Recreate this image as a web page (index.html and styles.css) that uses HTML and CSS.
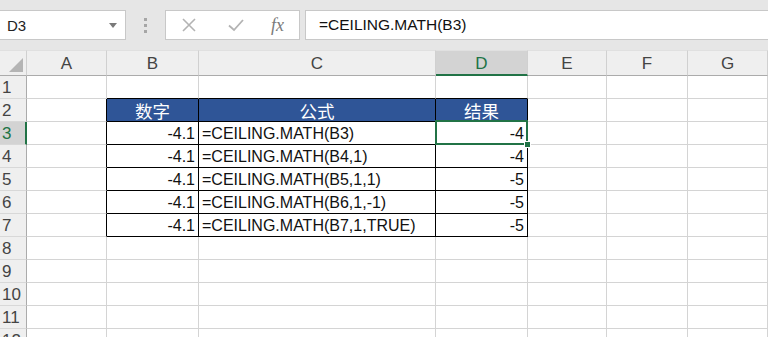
FILE: index.html
```html
<!DOCTYPE html>
<html lang="zh-CN">
<head>
  <meta charset="UTF-8" />
  <title>CEILING.MATH</title>
  <link rel="stylesheet" href="styles.css">
</head>
<body>

  <!-- Barra de fórmulas -->
  <div class="barra">
    <div class="caixa-nome">
      <span>D3</span>
      <svg class="seta" width="8" height="5" viewBox="0 0 8 5"><path d="M0 0h8L4 5z" fill="#7a7a7a"/></svg>
    </div>
    <div class="pontos"><i></i><i></i><i></i></div>
    <div class="botoes">
      <svg width="16" height="16" viewBox="0 0 16 16"><path d="M2 2L14 14M14 2L2 14" stroke="#b3b3b3" stroke-width="1.6"/></svg>
      <svg width="18" height="16" viewBox="0 0 18 16"><path d="M2 8.5L7 13L16 3" stroke="#b3b3b3" stroke-width="1.8" fill="none"/></svg>
      <span class="fx">fx</span>
    </div>
    <div class="formula">=CEILING.MATH(B3)</div>
  </div>

  <!-- Planilha -->
  <div class="planilha">
    <div class="canto"><svg width="14" height="14" viewBox="0 0 14 14"><path d="M14 0V14H0z" fill="#b4b4b4"/></svg></div>
    <div class="col">A</div>
    <div class="col">B</div>
    <div class="col">C</div>
    <div class="col ativa">D</div>
    <div class="col">E</div>
    <div class="col">F</div>
    <div class="col">G</div>

    <div class="lin">1</div>
    <div class="cel"></div><div class="cel topo"></div><div class="cel topo"></div><div class="cel topo"></div><div class="cel"></div><div class="cel"></div><div class="cel"></div>

    <div class="lin">2</div>
    <div class="cel borda-esq"></div>
    <div class="cel t cab">数字</div><div class="cel t cab">公式</div><div class="cel t cab">结果</div>
    <div class="cel"></div><div class="cel"></div><div class="cel"></div>

    <div class="lin ativa">3</div>
    <div class="cel borda-esq"></div>
    <div class="cel t num">-4.1</div><div class="cel t">=CEILING.MATH(B3)</div><div class="cel t num selecionada">-4</div>
    <div class="cel"></div><div class="cel"></div><div class="cel"></div>

    <div class="lin">4</div>
    <div class="cel borda-esq"></div>
    <div class="cel t num">-4.1</div><div class="cel t">=CEILING.MATH(B4,1)</div><div class="cel t num">-4</div>
    <div class="cel"></div><div class="cel"></div><div class="cel"></div>

    <div class="lin">5</div>
    <div class="cel borda-esq"></div>
    <div class="cel t num">-4.1</div><div class="cel t">=CEILING.MATH(B5,1,1)</div><div class="cel t num">-5</div>
    <div class="cel"></div><div class="cel"></div><div class="cel"></div>

    <div class="lin">6</div>
    <div class="cel borda-esq"></div>
    <div class="cel t num">-4.1</div><div class="cel t">=CEILING.MATH(B6,1,-1)</div><div class="cel t num">-5</div>
    <div class="cel"></div><div class="cel"></div><div class="cel"></div>

    <div class="lin">7</div>
    <div class="cel borda-esq"></div>
    <div class="cel t num">-4.1</div><div class="cel t">=CEILING.MATH(B7,1,TRUE)</div><div class="cel t num">-5</div>
    <div class="cel"></div><div class="cel"></div><div class="cel"></div>

    <div class="lin">8</div>
    <div class="cel"></div><div class="cel"></div><div class="cel"></div><div class="cel"></div><div class="cel"></div><div class="cel"></div><div class="cel"></div>
    <div class="lin">9</div>
    <div class="cel"></div><div class="cel"></div><div class="cel"></div><div class="cel"></div><div class="cel"></div><div class="cel"></div><div class="cel"></div>
    <div class="lin">10</div>
    <div class="cel"></div><div class="cel"></div><div class="cel"></div><div class="cel"></div><div class="cel"></div><div class="cel"></div><div class="cel"></div>
    <div class="lin">11</div>
    <div class="cel"></div><div class="cel"></div><div class="cel"></div><div class="cel"></div><div class="cel"></div><div class="cel"></div><div class="cel"></div>
    <div class="lin">12</div>
    <div class="cel"></div><div class="cel"></div><div class="cel"></div><div class="cel"></div><div class="cel"></div><div class="cel"></div><div class="cel"></div>
  </div>

</body>
</html>
```

FILE: styles.css
```css
body {
  margin: 0;
  width: 768px;
  height: 337px;
  overflow: hidden;
  background-color: #fff;
  font-family: "Liberation Sans", "Noto Sans CJK SC", sans-serif;
  color: #000;
}

.barra {
  height: 50px;
  box-sizing: border-box;
  padding-top: 10px;
  background-color: #e6e6e6;
  display: flex;
  align-items: flex-start;
}

.caixa-nome {
  width: 126px;
  height: 30px;
  box-sizing: border-box;
  background-color: #fff;
  border: 1px solid #c8c8c8;
  border-left: none;
  display: flex;
  align-items: center;
  justify-content: space-between;
  padding: 0 8px 0 7px;
  font-size: 15px;
  color: #222;
}

.seta {
  margin-top: 1px;
}

.pontos {
  width: 39px;
  height: 30px;
  display: flex;
  flex-direction: column;
  align-items: center;
  justify-content: center;
  gap: 3px;
}

.pontos i {
  width: 3px;
  height: 3px;
  background-color: #a6a6a6;
}

.botoes {
  width: 135px;
  height: 30px;
  box-sizing: border-box;
  background-color: #fff;
  border: 1px solid #c8c8c8;
  display: flex;
  align-items: center;
  padding-left: 15px;
  gap: 30px;
}

.fx {
  font-family: "Liberation Serif", serif;
  font-style: italic;
  font-size: 18px;
  color: #7a7a7a;
  margin-left: -4px;
}

.formula {
  flex: 1;
  margin-left: 5px;
  height: 30px;
  box-sizing: border-box;
  background-color: #fff;
  border: 1px solid #c8c8c8;
  border-right: none;
  padding-left: 13px;
  font-size: 15.5px;
  line-height: 28px;
  color: #111;
}

.planilha {
  display: grid;
  grid-template-columns: 27px 80px 92px 237px 92px 79px 81px 80px;
  grid-template-rows: 26px repeat(12, 23px);
}

.canto,
.col,
.lin {
  background-color: #efefef;
  box-sizing: border-box;
  border-right: 1px solid #d0d0d0;
  border-bottom: 1px solid #ababab;
  color: #444;
  font-size: 17px;
}

.canto {
  display: flex;
  align-items: flex-end;
  justify-content: flex-end;
  padding: 0 3px 3px 0;
  border-top: 1px solid #e0e0e0;
}

.col {
  display: flex;
  align-items: center;
  justify-content: center;
  border-top: 1px solid #e0e0e0;
  padding-top: 2px;
}

.col.ativa {
  background-color: #d3d3d3;
  border-bottom: 2px solid #217346;
  color: #217346;
}

.lin {
  border-bottom: 1px solid #d8d8d8;
  border-right: 1px solid #ababab;
  display: flex;
  align-items: center;
  padding-left: 2px;
  padding-top: 2px;
}

.lin.ativa {
  background-color: #d3d3d3;
  border-right: 2px solid #217346;
  color: #217346;
}

.cel {
  box-sizing: border-box;
  border-right: 1px solid #d4d4d4;
  border-bottom: 1px solid #d4d4d4;
  font-size: 16px;
  line-height: 22px;
  padding: 0 3px;
  white-space: nowrap;
  color: #111;
}

.topo {
  border-bottom-color: #000;
}

.borda-esq {
  border-right-color: #000;
}

.t {
  border-right-color: #000;
  border-bottom-color: #000;
  padding-top: 1px;
}

.cab {
  background-color: #2f5597;
  color: #fff;
  text-align: center;
  font-family: "Noto Sans CJK SC", sans-serif;
  font-size: 17.5px;
  line-height: 21px;
}

.num {
  text-align: right;
}

.selecionada {
  position: relative;
}

.selecionada::before {
  content: "";
  position: absolute;
  left: -1px;
  top: -2px;
  right: -1px;
  bottom: -1px;
  border: 2px solid #217346;
}

.selecionada::after {
  content: "";
  position: absolute;
  right: -4px;
  bottom: -4px;
  width: 5px;
  height: 5px;
  background-color: #217346;
  border: 1px solid #fff;
}
```
